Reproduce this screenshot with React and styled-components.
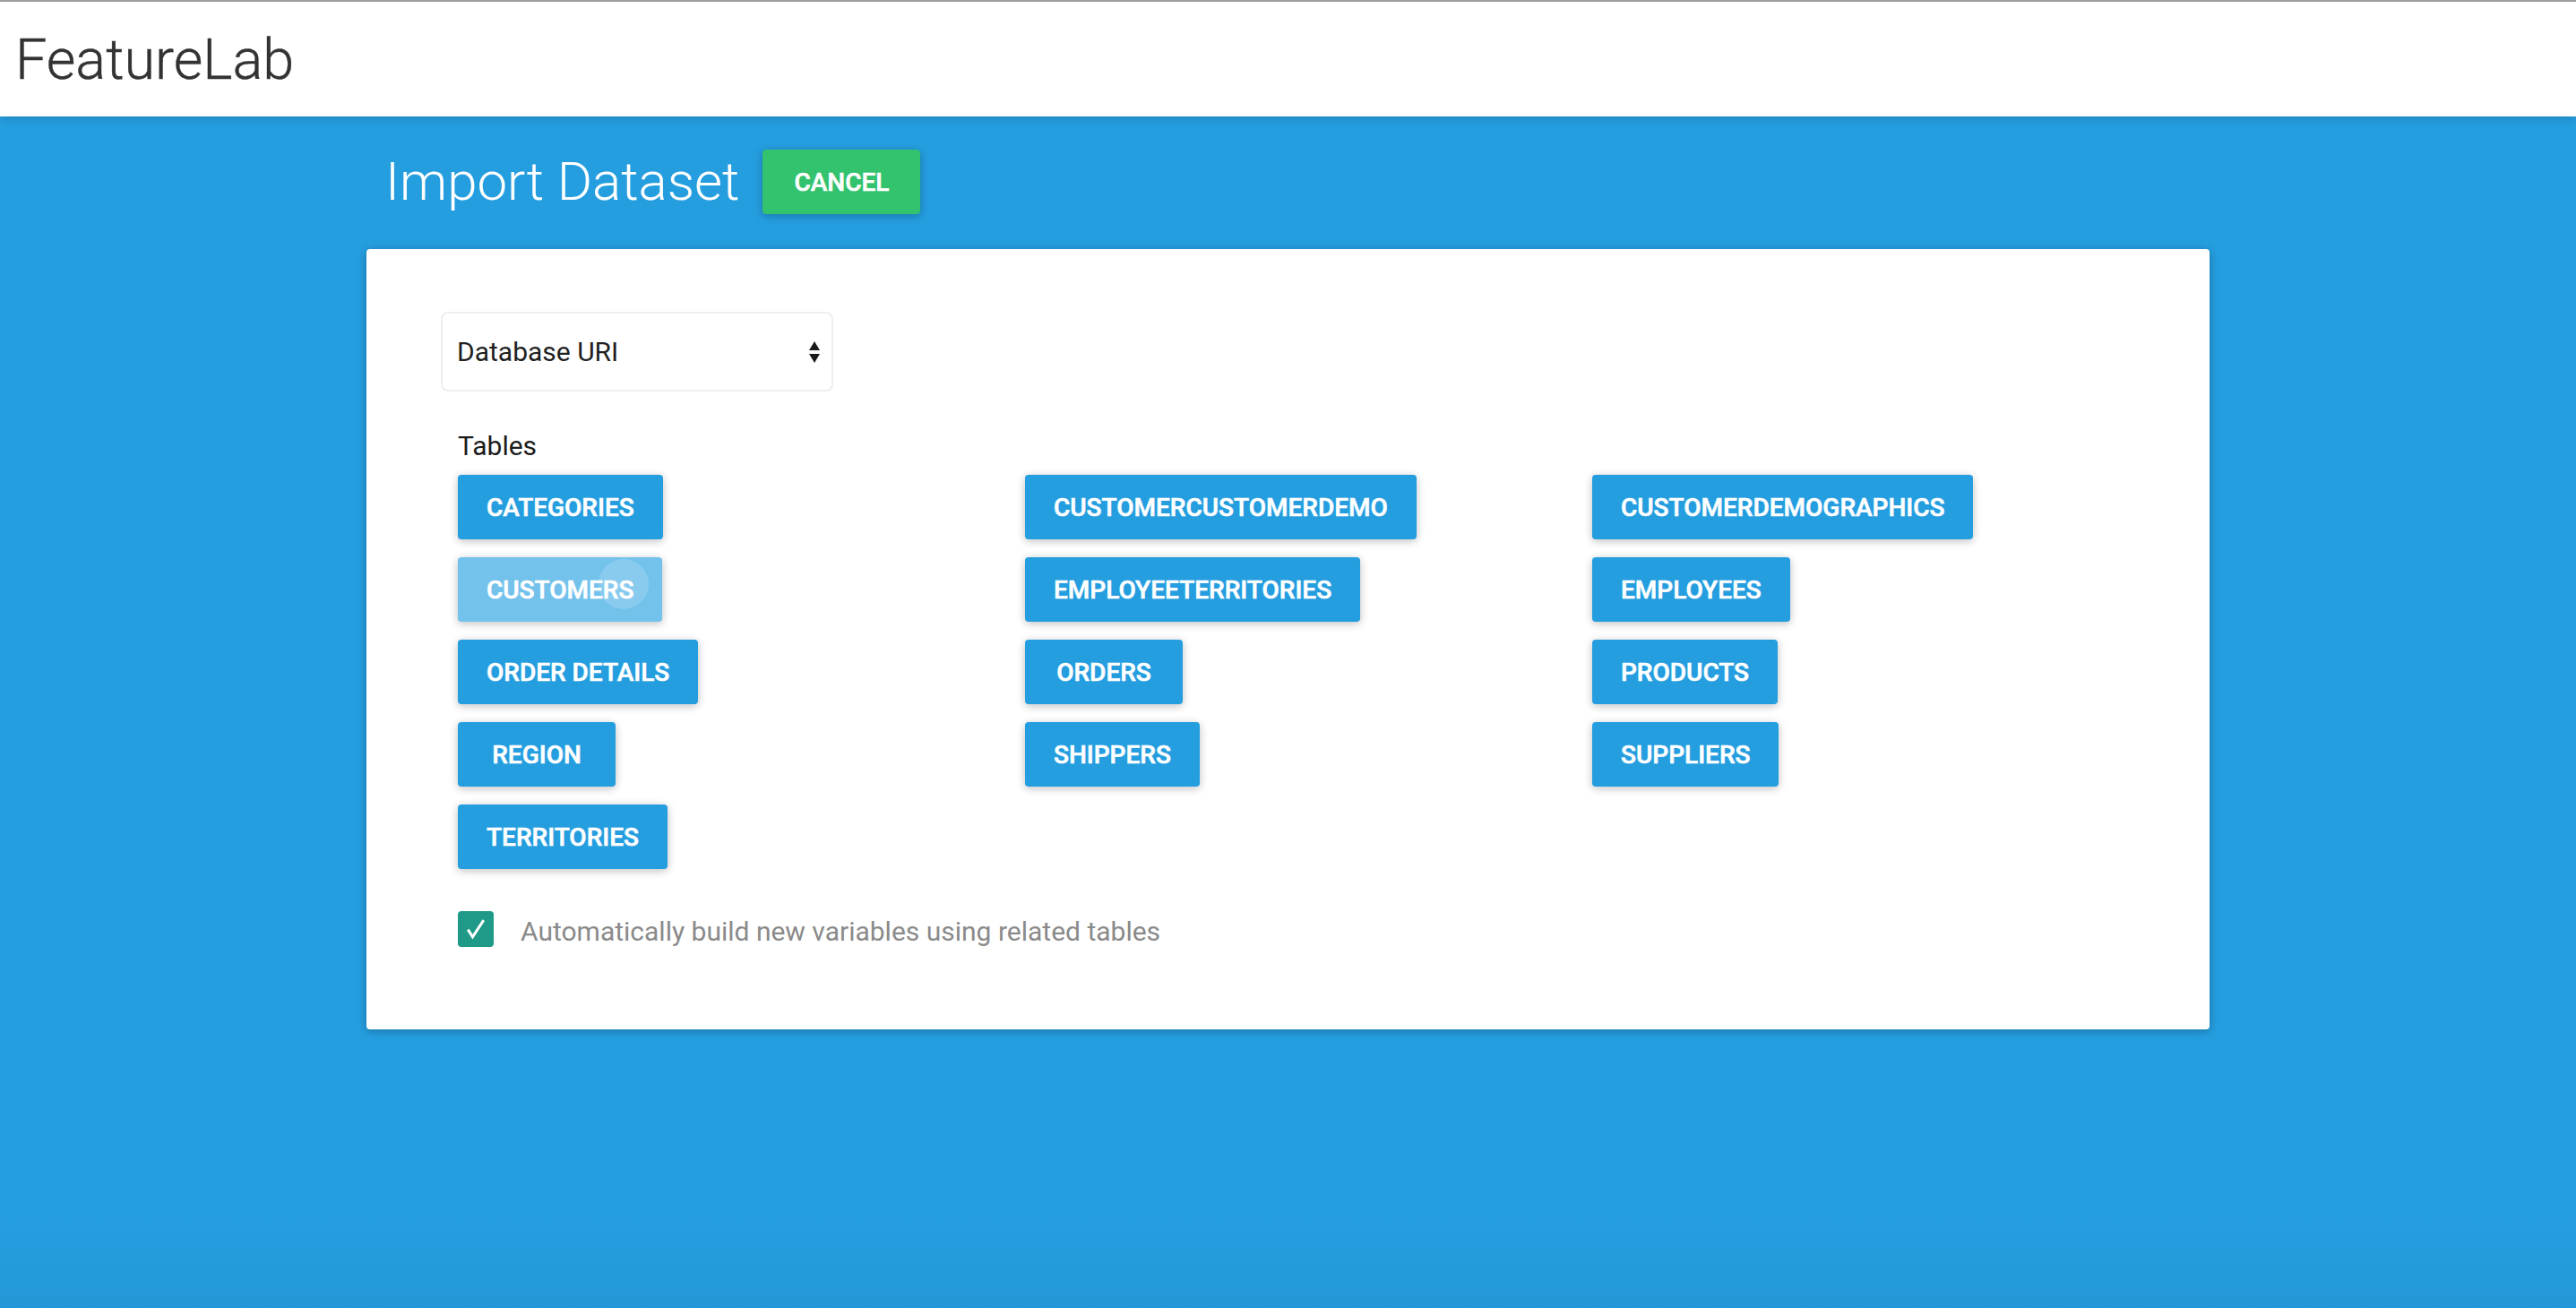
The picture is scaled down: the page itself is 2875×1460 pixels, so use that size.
import React from "react";
import styled, { createGlobalStyle } from "styled-components";

const Global = createGlobalStyle`
  html, body {
    margin: 0;
    padding: 0;
  }
  body {
    min-height: 100vh;
    font-family: Roboto, "Liberation Sans", sans-serif;
    background:
      linear-gradient(180deg, rgba(0, 0, 0, 0) calc(100% - 110px), rgba(0, 0, 0, 0.045) 100%),
      #259ee0;
  }
`;

const Page = styled.div`
  min-height: 1460px;
  display: flex;
  flex-direction: column;
`;

const Header = styled.header`
  height: 128px;
  border-top: 2px solid #9c9c9c;
  background: #ffffff;
  display: flex;
  align-items: center;
  padding-left: 17px;
  box-shadow: 0 2px 10px rgba(0, 0, 0, 0.18);
  position: relative;
  z-index: 2;
`;

const Brand = styled.h1`
  margin: 0;
  font-family: Roboto, "Liberation Sans", sans-serif;
  font-weight: 300;
  font-size: 63px;
  color: #333333;
  -webkit-text-stroke: 0.4px #333333;
`;

const Main = styled.main`
  width: 2057px;
  margin: 0 auto;
  padding-top: 37px;
`;

const TitleRow = styled.div`
  display: flex;
  align-items: center;
  gap: 26px;
  padding-left: 21px;
  margin-bottom: 39px;
`;

const Title = styled.h2`
  margin: 0;
  font-weight: 300;
  font-size: 60px;
  color: #ffffff;
  line-height: 72px;
`;

const RaisedButton = styled.button`
  height: 72px;
  min-width: 176px;
  padding: 0 32px;
  border: 0;
  border-radius: 4px;
  background: ${(p) => p.$bg || "#259ee0"};
  color: #ffffff;
  font-family: Roboto, "Liberation Sans", sans-serif;
  font-weight: 500;
  font-size: 28px;
  -webkit-text-stroke: 0.6px #ffffff;
  text-transform: uppercase;
  box-shadow: 0 2px 12px rgba(0, 0, 0, 0.12), 0 2px 8px rgba(0, 0, 0, 0.14);
  position: relative;
  overflow: hidden;
  cursor: pointer;
  justify-self: start;
  white-space: nowrap;
`;

const Ripple = styled.span`
  position: absolute;
  width: 56px;
  height: 56px;
  border-radius: 50%;
  right: 15px;
  top: 2px;
  background: rgba(255, 255, 255, 0.16);
`;

const Card = styled.section`
  background: #ffffff;
  border-radius: 4px;
  box-shadow: 0 2px 12px rgba(0, 0, 0, 0.14), 0 2px 8px rgba(0, 0, 0, 0.14);
  padding: 70px 83px 92px;
`;

const Select = styled.div`
  width: 438px;
  height: 89px;
  box-sizing: border-box;
  border: 2px solid #eeeeee;
  border-radius: 8px;
  display: flex;
  align-items: center;
  justify-content: space-between;
  padding: 0 12px 0 16px;
  font-size: 30px;
  color: #1f1f1f;
`;

const Section = styled.div`
  padding-left: 19px;
`;

const Label = styled.div`
  font-size: 30px;
  color: #1c1c1c;
  margin-top: 43px;
  margin-bottom: 15px;
`;

const Grid = styled.div`
  display: grid;
  grid-template-columns: repeat(3, 633px);
  row-gap: 20px;
`;

const CheckRow = styled.label`
  display: flex;
  align-items: center;
  gap: 30px;
  margin-top: 47px;
`;

const Box = styled.span`
  width: 40px;
  height: 40px;
  border-radius: 4px;
  background: #1f9a88;
  display: flex;
  align-items: center;
  justify-content: center;
`;

const CheckText = styled.span`
  font-size: 30px;
  color: #8a8a8a;
  padding-top: 4px;
`;

const tables = [
  "Categories",
  "CustomerCustomerDemo",
  "CustomerDemographics",
  "Customers",
  "EmployeeTerritories",
  "Employees",
  "Order Details",
  "Orders",
  "Products",
  "Region",
  "Shippers",
  "Suppliers",
  "Territories",
];

export default function App() {
  return (
    <Page>
      <Global />
      <Header>
        <Brand>FeatureLab</Brand>
      </Header>
      <Main>
        <TitleRow>
          <Title>Import Dataset</Title>
          <RaisedButton $bg="#33c26d">Cancel</RaisedButton>
        </TitleRow>
        <Card>
          <Select>
            <span>Database URI</span>
            <svg width="14" height="26" viewBox="0 0 14 26">
              <path d="M7 1 L13 11 L1 11 Z" fill="#1a1a1a" />
              <path d="M1 15 L13 15 L7 25 Z" fill="#1a1a1a" />
            </svg>
          </Select>
          <Section>
            <Label>Tables</Label>
            <Grid>
              {tables.map((t) => (
                <RaisedButton key={t} $bg={t === "Customers" ? "#73c2ec" : undefined}>
                  {t}
                  {t === "Customers" && <Ripple />}
                </RaisedButton>
              ))}
            </Grid>
            <CheckRow>
              <Box>
                <svg width="28" height="28" viewBox="0 0 24 24">
                  <path d="M4.5 12.5 L9 19.5 L19.5 3.5" fill="none" stroke="#ffffff" strokeWidth="2.6" />
                </svg>
              </Box>
              <CheckText>Automatically build new variables using related tables</CheckText>
            </CheckRow>
          </Section>
        </Card>
      </Main>
    </Page>
  );
}
